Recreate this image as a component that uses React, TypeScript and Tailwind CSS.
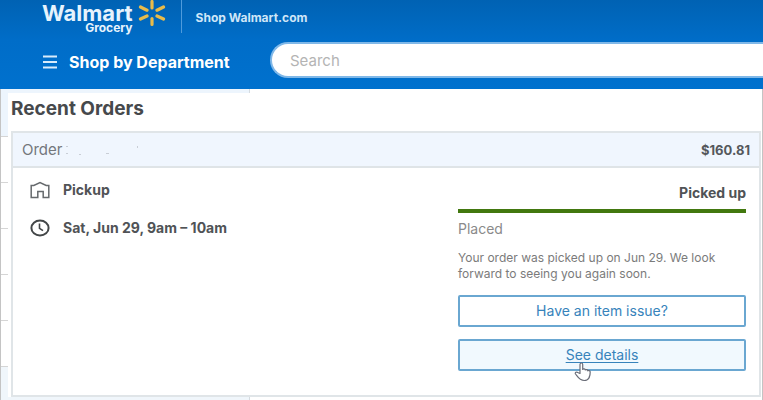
import type { ReactNode } from "react";
import clsx from "clsx";

const departments = [0, 1, 2, 3, 4];

function Spark() {
  return (
    <svg viewBox="0 0 28 28" className="h-7 w-7" fill="none" stroke="#e8bb4a" strokeWidth="3.200" strokeLinecap="round" aria-hidden="true">
      <path d="M14 1.500v6.500M14 18.500v6M2.500 7l6.500 3.200M19 16l6.500 3M2.500 19l6.500-3M19 10.200l6.500-3.200" />
    </svg>
  );
}

function Logo() {
  return (
    <a href="#home" className="flex items-start gap-[5px] text-[#e6f3fd]">
      <span className="flex flex-col items-end font-bold">
        <span className="text-[22px] leading-[26px]">Walmart</span>
        <span className="-mt-0.5 text-xs leading-2">Grocery</span>
      </span>
      <Spark />
    </a>
  );
}

function StoreIcon() {
  return (
    <svg viewBox="0 0 20 18" className="h-[18px] w-5 text-[#666a6d]" fill="none" stroke="currentColor" strokeWidth="1.500" aria-hidden="true">
      <path d="M1.200 16.500V4.500h2.600L10 1.500l6.200 3h2.600v12h-5.600V10.500H7.800v6z" />
    </svg>
  );
}

function ClockIcon() {
  return (
    <svg viewBox="0 0 20 18" className="h-[18px] w-5 text-[#434648]" fill="none" stroke="currentColor" strokeWidth="2" aria-hidden="true">
      <ellipse cx="10" cy="9" rx="8.600" ry="7.600" />
      <path d="M9.500 4.500V9.300l3.500 2.400" strokeWidth="1.600" />
    </svg>
  );
}

function PointerIcon() {
  return (
    <svg viewBox="0 0 18 20" className="absolute top-4 left-2 h-5 w-[18px]" fill="#fff" stroke="#6a6d78" strokeWidth="1.200" strokeLinejoin="round" aria-hidden="true">
      <path d="M6 11.500V2.500c0-2 2.700-2 2.700 0v5c.4-1 2.500-.8 2.600.5.500-.8 2.400-.5 2.500.8.700-.6 2.400-.2 2.400 1.200 0 4-.7 8.500-6 8.500-4.500 0-6-3-8.700-6.500-.9-1.400 1-2.500 2.300-1.500z" />
    </svg>
  );
}

function Detail({ icon, children }: { icon: ReactNode; children: ReactNode }) {
  return (
    <li className="flex items-center gap-[13px]">
      {icon}
      <span>{children}</span>
    </li>
  );
}

function OrderButton({ active, children }: { active?: boolean; children: ReactNode }) {
  return (
    <button
      type="button"
      className={clsx(
        "h-8 w-full rounded-xs border-2 border-[#6aa7d1] text-sm text-[#3783bb]",
        active ? "bg-[#f1f9fe]" : "bg-white",
      )}
    >
      {children}
    </button>
  );
}

function Header() {
  return (
    <header className="bg-linear-to-b from-[#0062b3] via-[#006dc8] via-45% to-[#0071ce] pb-[11px] text-white">
      <div className="flex h-9 items-start pl-[42px]">
        <Logo />
        <div className="ml-[15px] h-[33px] border-l border-[#4f9bdc]" />
        <a href="#walmart" className="ml-[14px] pt-2.5 text-xs leading-4 font-bold text-[#cfe6f8]">
          Shop Walmart.com
        </a>
      </div>
      <div className="flex items-center pt-1.5">
        <div className="w-[270px] shrink-0 pt-1 pl-[43px]">
          <button type="button" className="flex items-center gap-3 text-base font-bold">
            <svg viewBox="0 0 14 14" className="h-3.5 w-3.5" stroke="#d9ecfb" strokeWidth="2" aria-hidden="true">
              <path d="M0 1.500h14M0 7h14M0 12.500h14" />
            </svg>
            Shop by Department
          </button>
        </div>
        <input
          type="search"
          aria-label="Search"
          placeholder="Search"
          className="h-9 min-w-0 flex-1 rounded-l-full border-2 border-r-0 border-[#80b8e8] bg-white pl-[18px] text-[15px] text-[#444] outline-none placeholder:text-[#b4b4b4]"
        />
      </div>
    </header>
  );
}

function Sidebar() {
  return (
    <aside className="col-start-1 row-start-1 flex w-[249px] flex-col border-r border-[#d5dbe0]">
      <div className="h-12 border-b border-[#d5d5d5] bg-[#edf5fd]" />
      {departments.map((d) => (
        <div key={d} className="h-[46px] border-b border-[#d5d5d5]" />
      ))}
      <div className="flex-1 bg-[#f0f6fb]" />
    </aside>
  );
}

function Order() {
  return (
    <article className="border-2 border-[#e0e5e8] bg-white">
      <div className="flex h-[35px] items-center border-b-2 border-[#dfe4e7] bg-[#f0f6fe] px-[9px] pt-0.5">
        <span className="text-[15px] text-[#73777c]">Order</span>
        {/* what is left of the blanked-out order number */}
        <svg viewBox="0 0 80 12" className="ml-1 h-3 w-20" fill="#c9ced6" aria-hidden="true">
          <path d="M0 1h2v1H0zM0 8h2v1H0zM13 9h2v1h-2zM40 8h3v1h-3zM71 1h1v2h-1z" />
        </svg>
        <span className="ml-auto text-[13px] font-bold text-[#55585c]">$160.81</span>
      </div>
      <div className="flex justify-between pr-[13px] pb-6 pl-[17px]">
        <ul className="flex flex-col gap-[18px] pt-3 text-sm leading-5 font-bold text-[#505356]">
          <Detail icon={<StoreIcon />}>Pickup</Detail>
          <Detail icon={<ClockIcon />}>Sat, Jun 29, 9am – 10am</Detail>
        </ul>
        <div className="w-72 shrink-0 pt-[15px]">
          <p className="text-right text-sm leading-5 font-bold text-[#505356]">Picked up</p>
          <div className="mt-1.5 h-1 bg-[#42780f]" />
          <p className="mt-1.5 text-sm leading-5 text-[#8a8a8a]">Placed</p>
          <p className="mt-[11px] text-xs leading-4 text-[#7b7b7b]">
            Your order was picked up on Jun 29. We look
            <br />
            forward to seeing you again soon.
          </p>
          <div className="mt-[13px] flex flex-col gap-3">
            <OrderButton>Have an item issue?</OrderButton>
            <OrderButton active>
              <span className="relative underline underline-offset-2">
                See details
                <PointerIcon />
              </span>
            </OrderButton>
          </div>
        </div>
      </div>
    </article>
  );
}

export default function App() {
  return (
    <div className="overflow-hidden bg-white font-['Inter','Liberation_Sans',sans-serif]">
      <Header />
      <main className="grid border-x border-[#c4c4c4]">
        <Sidebar />
        <section className="col-start-1 row-start-1 mt-1 mr-px mb-[3px] ml-[7px] bg-white pl-[3px]">
          <h1 className="h-[38px] pt-1 text-[19px] leading-6 font-bold text-[#46494c]">Recent Orders</h1>
          <Order />
        </section>
      </main>
    </div>
  );
}
